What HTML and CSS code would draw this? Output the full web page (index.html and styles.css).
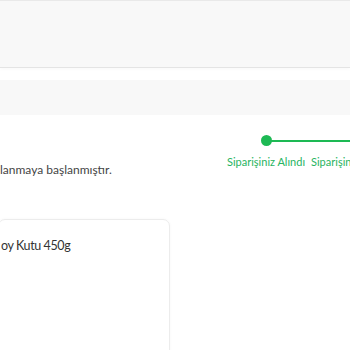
FILE: index.html
```html
<!DOCTYPE html>
<html lang="tr">
<head>
  <meta charset="UTF-8" />
  <title>Sipariş Detayı</title>
  <link rel="stylesheet" href="styles.css">
</head>
<body>
  <header class="topbar"></header>
  <div class="subbar"></div>

  <main>
    <section class="status">
      <p class="status-text">lanmaya başlanmıştır.</p>
      <div class="steps">
        <div class="step done">
          <span class="dot"></span>
          <span class="label">Siparişiniz Alındı</span>
        </div>
        <div class="step">
          <span class="dot"></span>
          <span class="label">Siparişiniz Hazırlanıyor</span>
        </div>
      </div>
    </section>

    <div class="card">
      <p class="product">oy Kutu 450g</p>
    </div>
  </main>
</body>
</html>
```

FILE: styles.css
```css
body { margin: 0; font-family: Lato, "Open Sans", Arial, sans-serif; background: #fff; color: #444; overflow: hidden; }
.topbar { height: 66px; background: #f8f8f8; border-top: 1px solid #e9e9e9; border-bottom: 1px solid #e4e4e4; box-shadow: 0 1px 4px rgba(0,0,0,0.03); }
.subbar { height: 35px; background: #f8f8f8; margin-top: 12px; }

.status { display: flex; align-items: flex-start; height: 104px; }
.status-text { flex: 0 0 224px; margin: 47px 0 0 0; font-size: 12px; color: #444; white-space: nowrap; }

.steps { display: flex; margin-top: 20px; }
.step { padding: 0 3px; display: flex; flex-direction: column; align-items: center; position: relative; }
.step .dot { width: 11px; height: 11px; border-radius: 50%; background: #1db954; position: relative; z-index: 1; }
.step.done::after { content: ""; position: absolute; left: 50%; width: 300px; top: 4.5px; height: 2px; background: #1db954; }
.step .label { margin-top: 9px; font-size: 11px; color: #28b461; white-space: nowrap; }

.card { box-sizing: border-box; width: 172px; height: 160px; margin-left: -2px; border: 1px solid #ececec; border-radius: 7px; box-shadow: 0 0 3px rgba(0,0,0,0.04); }
.product { margin: 18px 0 0 2px; font-size: 12.5px; letter-spacing: -0.4px; color: #333; }
```
